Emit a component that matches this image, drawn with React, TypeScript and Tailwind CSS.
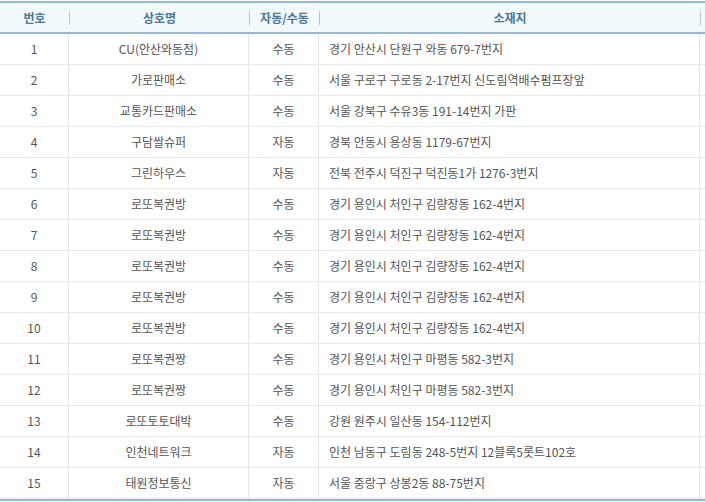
import React from "react";

const rows: [string, string, string, string][] = [
  ["1", "CU(안산와동점)", "수동", "경기 안산시 단원구 와동 679-7번지"],
  ["2", "가로판매소", "수동", "서울 구로구 구로동 2-17번지 신도림역배수펌프장앞"],
  ["3", "교통카드판매소", "수동", "서울 강북구 수유3동 191-14번지 가판"],
  ["4", "구담쌀슈퍼", "자동", "경북 안동시 용상동 1179-67번지"],
  ["5", "그린하우스", "자동", "전북 전주시 덕진구 덕진동1가 1276-3번지"],
  ["6", "로또복권방", "수동", "경기 용인시 처인구 김량장동 162-4번지"],
  ["7", "로또복권방", "수동", "경기 용인시 처인구 김량장동 162-4번지"],
  ["8", "로또복권방", "수동", "경기 용인시 처인구 김량장동 162-4번지"],
  ["9", "로또복권방", "수동", "경기 용인시 처인구 김량장동 162-4번지"],
  ["10", "로또복권방", "수동", "경기 용인시 처인구 김량장동 162-4번지"],
  ["11", "로또복권짱", "수동", "경기 용인시 처인구 마평동 582-3번지"],
  ["12", "로또복권짱", "수동", "경기 용인시 처인구 마평동 582-3번지"],
  ["13", "로또토토대박", "수동", "강원 원주시 일산동 154-112번지"],
  ["14", "인천네트워크", "자동", "인천 남동구 도림동 248-5번지 12블록5롯트102호"],
  ["15", "태원정보통신", "자동", "서울 중랑구 상봉2동 88-75번지"],
];

export default function App() {
  return (
    <div
      className="w-[705px] h-[502px] bg-white text-[12px] overflow-hidden"
      style={{ fontFamily: '"Noto Sans CJK KR", "Noto Sans", sans-serif' }}
    >
      <div className="h-px bg-white" />
      <div className="flex h-[33px] items-center border-t-2 border-b-2 border-[#94bad6] bg-[#f2f9fd] font-bold text-[#4d7598]">
        <div className="w-[69px] text-center">번호</div>
        <div className="w-px h-[14px] bg-[#b8c4cc]" />
        <div className="w-[179px] text-center">상호명</div>
        <div className="w-px h-[14px] bg-[#b8c4cc]" />
        <div className="w-[69px] text-center">자동/수동</div>
        <div className="w-px h-[14px] bg-[#b8c4cc]" />
        <div className="w-[380px] text-center">소재지</div>
        <div className="w-px h-[14px] bg-[#b8c4cc]" />
      </div>
      {rows.map((r) => (
        <div key={r[0]} className="flex h-[31px] items-center border-b border-[#e9e9e9] text-[#555555]">
          <div className="w-[69px] h-full flex items-center justify-center border-r border-[#e6e6e6]">{r[0]}</div>
          <div className="w-[180px] h-full flex items-center justify-center border-r border-[#e6e6e6]">{r[1]}</div>
          <div className="w-[70px] h-full flex items-center justify-center border-r border-[#e6e6e6]">{r[2]}</div>
          <div className="w-[381px] h-full flex items-center pl-[10px] border-r border-[#e6e6e6]">{r[3]}</div>
        </div>
      ))}
      <div className="h-[2px] bg-[#94bad6]" />
    </div>
  );
}
